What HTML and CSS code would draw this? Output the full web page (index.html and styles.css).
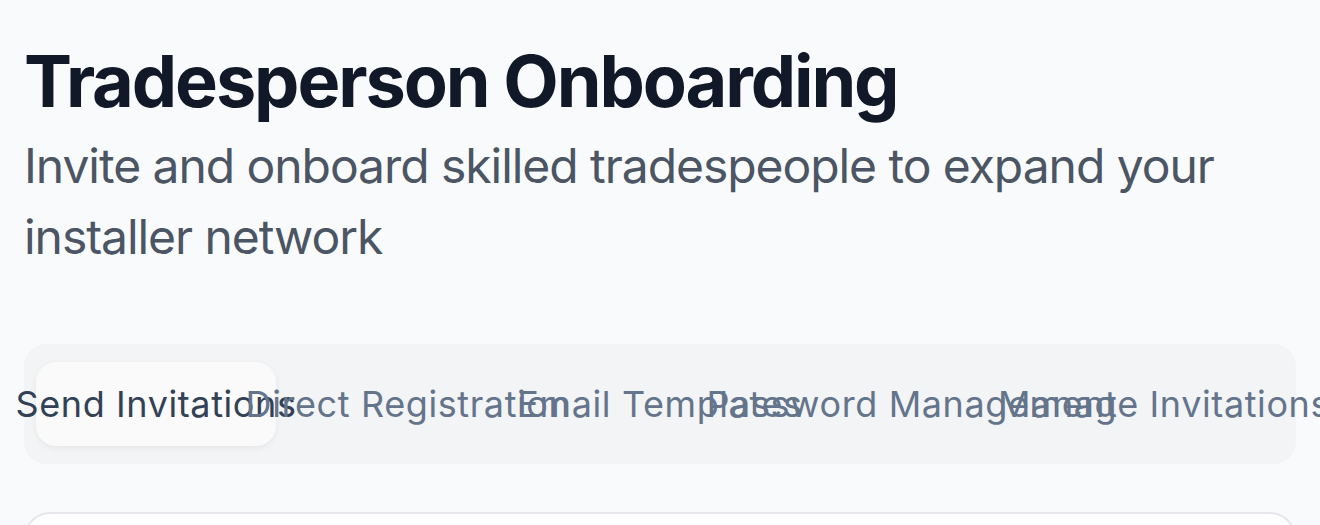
FILE: index.html
```html
<!DOCTYPE html>
<html lang="en">
<head>
<meta charset="utf-8">
<title>Tradesperson Onboarding</title>
<link rel="stylesheet" href="styles.css">
</head>
<body>
<main class="page">
  <header class="header">
    <h1 class="title">Tradesperson Onboarding</h1>
    <p class="subtitle">Invite and onboard skilled tradespeople to expand your installer network</p>
  </header>
  <div class="tabs" role="tablist">
    <button class="tab active" role="tab">Send Invitations</button>
    <button class="tab" role="tab">Direct Registration</button>
    <button class="tab" role="tab">Email Templates</button>
    <button class="tab" role="tab">Password Management</button>
    <button class="tab" role="tab">Manage Invitations</button>
  </div>
  <section class="card"></section>
</main>
</body>
</html>
```
FILE: styles.css
```css
* { box-sizing: border-box; }
html, body { margin: 0; padding: 0; }
body {
  background: #f9fafb;
  font-family: Inter, "Noto Sans", sans-serif;
  overflow: hidden;
}
.page {
  padding: 41px 24px 24px;
  display: flex;
  flex-direction: column;
}
.header { margin-bottom: 72px; }
.title {
  margin: 0;
  font-size: 72px;
  line-height: 80px;
  font-weight: 700;
  color: #111827;
  letter-spacing: -2.1px;
}
.subtitle {
  margin: 9px 0 0;
  font-size: 48px;
  line-height: 71px;
  color: #4b5563;
  letter-spacing: -1.05px;
  max-width: 1240px;
}
.tabs {
  display: flex;
  gap: 12px;
  padding: 18px 12px;
  background: #f3f4f6;
  border-radius: 22px;
}
.tab {
  flex: 0 0 240px;
  width: 240px;
  height: 84px;
  border: 0;
  border-radius: 20px;
  background: transparent;
  font-family: inherit;
  font-size: 36px;
  letter-spacing: 0.6px;
  color: #64748b;
  white-space: nowrap;
  display: flex;
  justify-content: center;
  align-items: center;
  padding: 0;
  overflow: visible;
}
.tab.active {
  background: #fafafa;
  color: #334155;
  box-shadow: 0 2px 6px rgba(0,0,0,0.06);
}
.card {
  margin-top: 48px;
  height: 200px;
  background: #ffffff;
  border: 2px solid #e5e7eb;
  border-radius: 26px;
}
```
